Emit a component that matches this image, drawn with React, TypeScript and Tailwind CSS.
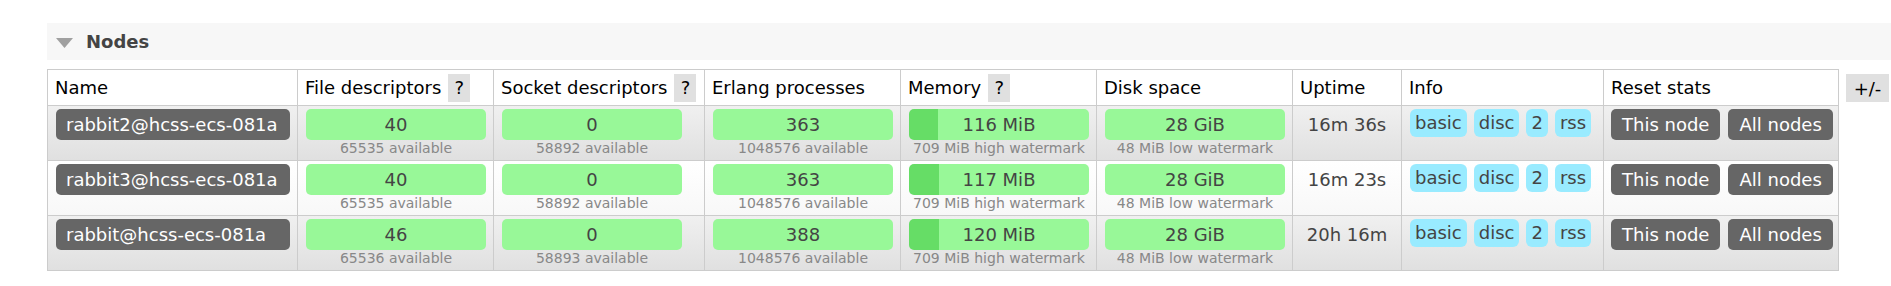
import type { ReactNode } from "react";

type NodeRow = {
  name: string;
  fd: number;
  fdAvail: number;
  sockets: number;
  socketsAvail: number;
  procs: number;
  procsAvail: number;
  memMiB: number;
  uptime: string;
};

const nodes: NodeRow[] = [
  { name: "rabbit2@hcss-ecs-081a", fd: 40, fdAvail: 65535, sockets: 0, socketsAvail: 58892, procs: 363, procsAvail: 1048576, memMiB: 116, uptime: "16m 36s" },
  { name: "rabbit3@hcss-ecs-081a", fd: 40, fdAvail: 65535, sockets: 0, socketsAvail: 58892, procs: 363, procsAvail: 1048576, memMiB: 117, uptime: "16m 23s" },
  { name: "rabbit@hcss-ecs-081a", fd: 46, fdAvail: 65536, sockets: 0, socketsAvail: 58893, procs: 388, procsAvail: 1048576, memMiB: 120, uptime: "20h 16m" },
];

const HIGH_WATERMARK = 709;
const BAR_WIDTH = 180;

function Help() {
  return (
    <span className="ml-[7px] flex h-[28px] w-[22px] items-center justify-center bg-[#e0e0e0]">?</span>
  );
}

function HeaderCell({ children }: { children: ReactNode }) {
  return (
    <div className="flex h-[36px] items-start border-r border-b border-[#ccc] bg-white pt-[4px] pl-[7px]">
      <div className="flex h-[28px] items-center leading-[28px] text-black">{children}</div>
    </div>
  );
}

function Cell({ alt, children }: { alt: boolean; children: ReactNode }) {
  return (
    <div
      className={`h-[55px] border-r border-b border-[#ccc] pt-[3px] pl-2 ${
        alt ? "bg-linear-to-b from-white to-[#f8f8f8]" : "bg-linear-to-b from-[#f0f0f0] to-[#e0e0e0]"
      }`}
    >
      {children}
    </div>
  );
}

function StatBar({ value, sub, used }: { value: string; sub: string; used?: number }) {
  const style =
    used !== undefined
      ? { backgroundImage: `linear-gradient(to right, #66dd66 ${used}px, #98f898 ${used}px)` }
      : undefined;
  return (
    <div className="w-[180px]">
      <div
        className="h-[31px] rounded-[5px] bg-[#98f898] text-center leading-[31px] text-[#444]"
        style={style}
      >
        {value}
      </div>
      <div className="text-center text-[14px] leading-[17px] text-[#888]">{sub}</div>
    </div>
  );
}

export default function App() {
  return (
    <div className="min-h-[286px] bg-white pt-[23px] pl-[47px] font-['DejaVu_Sans',Verdana,sans-serif] text-[18px]">
      <div className="flex h-[37px] items-center bg-[#f7f7f7] pl-[9px]">
        <svg width="17" height="10" viewBox="0 0 17 10" className="mt-[3px]">
          <polygon points="0,0 17,0 8.5,10" fill="#a0a0a0" />
        </svg>
        <span className="ml-[13px] font-bold text-[#444]">Nodes</span>
      </div>

      <div className="mt-[9px] flex items-start">
        <div className="grid grid-cols-[250px_196px_211px_196px_196px_196px_109px_202px_235px] border-t border-l border-[#ccc]">
          <HeaderCell>Name</HeaderCell>
          <HeaderCell>
            File descriptors <Help />
          </HeaderCell>
          <HeaderCell>
            Socket descriptors <Help />
          </HeaderCell>
          <HeaderCell>Erlang processes</HeaderCell>
          <HeaderCell>
            Memory <Help />
          </HeaderCell>
          <HeaderCell>Disk space</HeaderCell>
          <HeaderCell>Uptime</HeaderCell>
          <HeaderCell>Info</HeaderCell>
          <HeaderCell>Reset stats</HeaderCell>

          {nodes.map((node, index) => {
            const alt = index % 2 === 1;
            const used = Math.round((node.memMiB / HIGH_WATERMARK) * BAR_WIDTH);
            return [
              <Cell key={`${node.name}-name`} alt={alt}>
                <div className="flex h-[31px] w-[234px] items-center rounded-[5px] bg-[#666] pl-[10px] text-white">
                  {node.name}
                </div>
              </Cell>,
              <Cell key={`${node.name}-fd`} alt={alt}>
                <StatBar value={String(node.fd)} sub={`${node.fdAvail} available`} />
              </Cell>,
              <Cell key={`${node.name}-sock`} alt={alt}>
                <StatBar value={String(node.sockets)} sub={`${node.socketsAvail} available`} />
              </Cell>,
              <Cell key={`${node.name}-proc`} alt={alt}>
                <StatBar value={String(node.procs)} sub={`${node.procsAvail} available`} />
              </Cell>,
              <Cell key={`${node.name}-mem`} alt={alt}>
                <StatBar value={`${node.memMiB} MiB`} sub={`${HIGH_WATERMARK} MiB high watermark`} used={used} />
              </Cell>,
              <Cell key={`${node.name}-disk`} alt={alt}>
                <StatBar value="28 GiB" sub="48 MiB low watermark" />
              </Cell>,
              <Cell key={`${node.name}-up`} alt={alt}>
                <div className="-ml-2 text-center leading-[31px] text-[#444]">{node.uptime}</div>
              </Cell>,
              <Cell key={`${node.name}-info`} alt={alt}>
                <div className="flex gap-[7px] text-[#444]">
                  {["basic", "disc", "2", "rss"].map((tag) => (
                    <span key={tag} className="h-[28px] rounded-[6px] bg-[#99ebff] px-[5px] leading-[28px]">
                      {tag}
                    </span>
                  ))}
                </div>
              </Cell>,
              <Cell key={`${node.name}-reset`} alt={alt}>
                <div className="-ml-px flex gap-[8px]">
                  <button className="h-[31px] rounded-[5px] bg-[#666] px-[11px] text-white">This node</button>
                  <button className="h-[31px] rounded-[5px] bg-[#666] px-[11px] text-white">All nodes</button>
                </div>
              </Cell>,
            ];
          })}
        </div>

        <span className="mt-[5px] ml-[7px] flex h-[28px] w-[43px] items-center justify-center bg-[#e0e0e0] text-black">
          +/-
        </span>
      </div>
    </div>
  );
}
